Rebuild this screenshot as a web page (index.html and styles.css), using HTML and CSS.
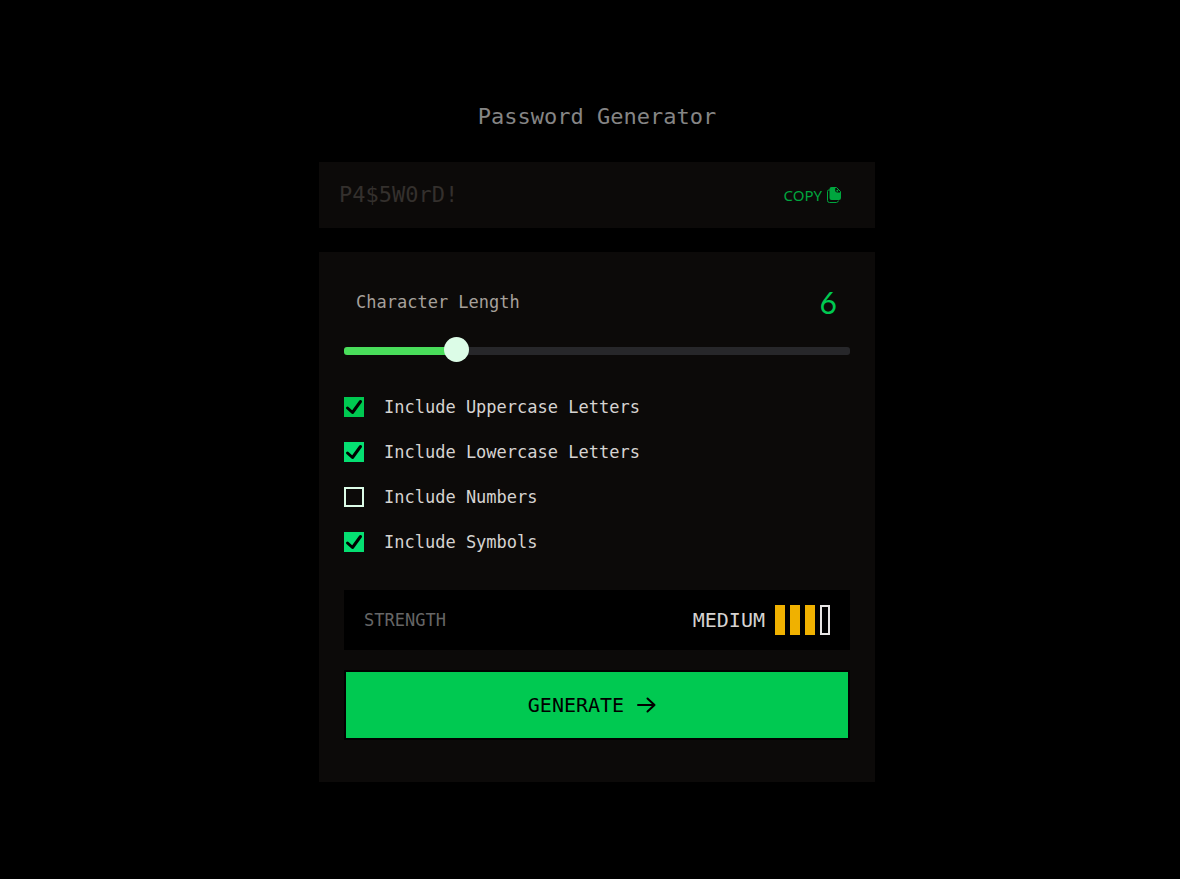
FILE: index.html
```html
<!DOCTYPE html>
<html lang="en">
<head>
<meta charset="utf-8">
<meta name="viewport" content="width=device-width, initial-scale=1">
<title>Password Generator</title>
<link rel="stylesheet" href="styles.css">
</head>
<body>
<main class="generator">
  <h1 class="title">Password Generator</h1>
  <div class="output">
    <input class="password" type="text" placeholder="P4$5W0rD!" aria-label="Generated password" readonly>
    <button class="copy" type="button">COPY
      <svg class="copy-icon" viewBox="0 0 16 18" aria-hidden="true">
        <path d="M3.500 4H2.800Q1.500 4 1.500 5.300V14.500Q1.500 16.500 3.500 16.500H10.500Q12 16.500 12.300 15" fill="none" stroke="currentColor" stroke-linecap="round"/>
        <path d="M5.500 1H9.200V4.500Q9.200 6.500 11.200 6.500H15V12Q15 14 13 14H5.500Q3.500 14 3.500 12V3Q3.500 1 5.500 1Z" fill="currentColor"/>
        <path d="M9 1.500H10.500L14.500 5.500V7" fill="none" stroke="currentColor" stroke-linejoin="round"/>
        <circle cx="11.300" cy="4.700" r="1" fill="currentColor"/>
      </svg>
    </button>
  </div>
  <form class="panel">
    <div class="length-row">
      <label for="length">Character Length</label>
      <output class="length-value" for="length">6</output>
    </div>
    <input class="slider" id="length" type="range" min="1" max="25" value="6">
    <div class="options">
      <label class="option"><input class="check check-focus" type="checkbox" checked>Include Uppercase Letters</label>
      <label class="option"><input class="check" type="checkbox" checked>Include Lowercase Letters</label>
      <label class="option"><input class="check" type="checkbox">Include Numbers</label>
      <label class="option"><input class="check" type="checkbox" checked>Include Symbols</label>
    </div>
    <div class="strength">
      <span class="strength-label">STRENGTH</span>
      <span class="strength-level">MEDIUM</span>
      <div class="bars" aria-hidden="true">
        <span class="bar bar-on"></span><span class="bar bar-on"></span><span class="bar bar-on"></span><span class="bar"></span>
      </div>
    </div>
    <button class="generate" type="button">GENERATE
      <svg class="arrow" viewBox="0 0 20 20" aria-hidden="true"><path d="M2 10H18.500M11.500 3.500L18.500 10L11.500 16.500" fill="none" stroke="currentColor" stroke-width="2" stroke-linecap="round" stroke-linejoin="round"/></svg>
    </button>
  </form>
</main>
</body>
</html>
```
FILE: styles.css
```css
* { box-sizing: border-box; }

body {
  margin: 0;
  padding: 100px 0 97px 14px;
  background: #000;
  color: #d6d3d1;
  font-family: "DejaVu Sans Mono", monospace;
  font-size: 17px;
}

button, input { font: inherit; border-radius: 0; }

.generator {
  max-width: 556px;
  margin: 0 auto;
}

.title {
  margin: 0 0 28px;
  color: #858585;
  font-size: 22px;
  font-weight: 400;
  line-height: 34px;
  text-align: center;
}

.output {
  display: flex;
  align-items: center;
  margin-bottom: 24px;
  padding: 15px 33px 15px 20px;
  background: #0c0a09;
}

.password {
  flex: 1;
  min-width: 0;
  height: 36px;
  padding: 0 0 2px;
  border: 0;
  outline: 0;
  background: transparent;
  color: #d6d3d1;
  font-size: 22px;
}

.password::placeholder { color: #34302d; opacity: 1; }

.copy {
  display: flex;
  align-items: center;
  gap: 4px;
  padding: 0;
  border: 0;
  background: transparent;
  color: #00a63e;
  font-family: "Noto Sans", sans-serif;
  font-size: 15px;
}

.copy-icon { width: 16px; height: 18px; }

.panel {
  padding: 25px 25px 42px;
  background: #0c0a09;
}

.length-row {
  display: flex;
  align-items: center;
  justify-content: space-between;
  padding: 0 13px 0 12px;
  line-height: 50px;
  color: #a6a09b;
}

.length-value {
  color: #00c951;
  font-family: Lato, sans-serif;
  font-size: 30px;
}

.slider {
  display: block;
  width: 100%;
  height: 25px;
  margin: 11px 0 32px;
  appearance: none;
  background: transparent;
}

.slider::-webkit-slider-runnable-track {
  height: 8px;
  border-radius: 3px;
  background: linear-gradient(to right, #4ade5b 22%, #27272a 22%);
}

.slider::-webkit-slider-thumb {
  width: 25px;
  height: 25px;
  margin-top: -10px;
  appearance: none;
  border-radius: 50%;
  background: #dcfce7;
}

.options {
  display: grid;
  gap: 21px;
  margin-bottom: 36px;
}

.option {
  display: flex;
  align-items: center;
  gap: 20px;
  line-height: 24px;
}

.check {
  width: 20px;
  height: 20px;
  margin: 0;
  appearance: none;
  border: 2px solid #dcfce7;
}

.check:checked {
  border: 0;
  background: #05df72 url("data:image/svg+xml,%3Csvg xmlns='http://www.w3.org/2000/svg' viewBox='0 0 20 20'%3E%3Cpath d='M3.500 11L8.500 15.500L16.500 4.500' fill='none' stroke='black' stroke-width='3' stroke-linecap='round' stroke-linejoin='round'/%3E%3C/svg%3E") center / 20px;
}

.check-focus:checked { background-color: #00c951; }

.strength {
  display: flex;
  align-items: center;
  gap: 10px;
  margin-bottom: 20px;
  padding: 15px 20px;
  background: #000;
}

.strength-label { flex: 1; color: #666; }

.strength-level { font-size: 20px; }

.bars { display: flex; gap: 5px; }

.bar {
  width: 10px;
  height: 30px;
  border: 2px solid #e7e5e4;
}

.bar-on { border-color: #f0b100; background: #f0b100; }

.generate {
  display: flex;
  align-items: center;
  justify-content: center;
  gap: 12px;
  width: 100%;
  height: 70px;
  padding: 0 10px 0 0;
  border: 2px solid #000;
  background: #00c951;
  color: #000;
  font-size: 20px;
}

.arrow { width: 20px; height: 20px; }
```
